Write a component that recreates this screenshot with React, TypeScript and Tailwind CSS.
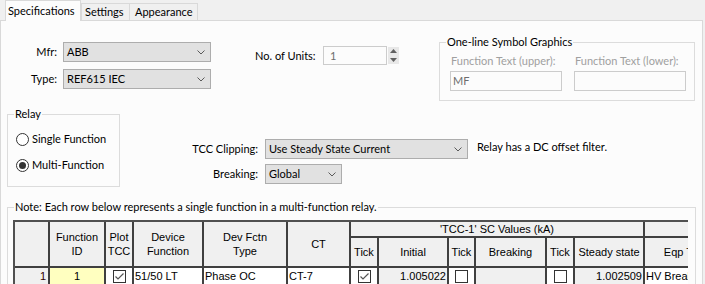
import React from "react";

const Chevron = () => (
  <svg width="8" height="5" viewBox="0 0 8 5" className="shrink-0">
    <path d="M0.5 0.5L4 4L7.5 0.5" fill="none" stroke="#5a5a5a" strokeWidth="1" />
  </svg>
);

function Combo({ className, text }: { className: string; text: string }) {
  return (
    <div
      className={`h-[20px] border border-[#adadad] bg-[#e1e1e1] flex items-center justify-between pl-[3px] pr-[5px] ${className}`}
    >
      <span className="leading-[14px] whitespace-nowrap">{text}</span>
      <Chevron />
    </div>
  );
}

function Radio({ checked, label }: { checked?: boolean; label: string }) {
  return (
    <div className="flex items-center h-[14px]">
      <div className="w-[13px] h-[13px] rounded-full border border-[#333333] bg-white flex items-center justify-center shrink-0">
        {checked && <div className="w-[7px] h-[7px] rounded-full bg-[#333333]" />}
      </div>
      <span className="ml-[3px] leading-[14px] whitespace-nowrap">{label}</span>
    </div>
  );
}

function Check({ checked }: { checked?: boolean }) {
  return (
    <div className="w-[13px] h-[13px] border border-[#333333] bg-white flex items-center justify-center">
      {checked && (
        <svg width="9" height="7" viewBox="0 0 9 7">
          <path d="M0.5 3.5L3 6L8.5 0.5" fill="none" stroke="#555555" strokeWidth="1.2" />
        </svg>
      )}
    </div>
  );
}

const H =
  "bg-[#f0f0f0] border-r-2 border-b-2 border-[#404040] flex items-center justify-center text-center leading-[14px] whitespace-nowrap overflow-hidden";
const D = "border-r-2 border-b-2 border-[#404040] flex items-center whitespace-nowrap overflow-hidden";

export default function App() {
  return (
    <div className="w-[705px] h-[284px] overflow-hidden bg-[#f0f0f0] text-[11px] text-black font-['Lato','Noto_Sans',sans-serif]">
      {/* Tabs */}
      <div className="flex items-end h-[20px] pl-[5px]">
        <div className="relative z-10 h-[21px] -mb-[1px] w-[76px] border border-b-0 border-[#d9d9d9] bg-[#fcfcfc] pl-[2px] pt-[3px] leading-[14px] whitespace-nowrap">
          Specifications
        </div>
        <div className="h-[17px] w-[49px] border border-b-0 border-[#d9d9d9] bg-[#f0f0f0] pl-[3px] pt-[1px] leading-[14px] whitespace-nowrap">
          Settings
        </div>
        <div className="h-[17px] w-[69px] -ml-[1px] border border-b-0 border-[#d9d9d9] bg-[#f0f0f0] pl-[5px] pt-[1px] leading-[14px] whitespace-nowrap">
          Appearance
        </div>
      </div>

      {/* Panel */}
      <div className="w-[703px] h-[270px] border border-[#d9d9d9] bg-[#fcfcfc] flex flex-col overflow-hidden">
        {/* Row 1 */}
        <div className="flex items-start mt-[14px]">
          <div className="mt-[7px] flex flex-col gap-[7px]">
            <div className="flex items-center">
              <span className="w-[56px] text-right leading-[14px]">Mfr:</span>
              <Combo className="ml-[6px] w-[148px]" text="ABB" />
            </div>
            <div className="flex items-center">
              <span className="w-[56px] text-right leading-[14px]">Type:</span>
              <Combo className="ml-[6px] w-[148px]" text="REF615 IEC" />
            </div>
          </div>

          <div className="ml-[44px] mt-[11px] flex items-center">
            <span className="w-[68px] leading-[14px] whitespace-nowrap">No. of Units:</span>
            <div className="w-[64px] h-[19px] border border-[#cccccc] pl-[6px] text-[#6d6d6d] flex items-center leading-[14px]">
              1
            </div>
            <div className="ml-[1px] w-[11px] h-[17px] bg-[#e8e8e8] flex flex-col items-center justify-around">
              <svg width="7" height="4" viewBox="0 0 7 4">
                <path d="M0 4L3.5 0L7 4Z" fill="#606060" />
              </svg>
              <svg width="7" height="4" viewBox="0 0 7 4">
                <path d="M0 0L3.5 4L7 0Z" fill="#606060" />
              </svg>
            </div>
          </div>

          <fieldset className="ml-[40px] w-[256px] h-[66px] border border-[#dcdcdc]">
            <legend className="ml-[6px] px-[1px] leading-[14px] whitespace-nowrap">One-line Symbol Graphics</legend>
            <div className="pl-[10px] pt-[5px] flex gap-[12px]">
              <div className="w-[112px] flex flex-col">
                <span className="pl-[1px] leading-[14px] text-[#a0a0a0] whitespace-nowrap">Function Text (upper):</span>
                <div className="mt-[3px] h-[20px] border border-[#cccccc] pl-[2px] text-[#6d6d6d] flex items-center">MF</div>
              </div>
              <div className="w-[112px] flex flex-col">
                <span className="pl-[1px] leading-[14px] text-[#a0a0a0] whitespace-nowrap">Function Text (lower):</span>
                <div className="mt-[3px] h-[20px] border border-[#cccccc]" />
              </div>
            </div>
          </fieldset>
        </div>

        {/* Row 2 */}
        <div className="flex items-start mt-[6px]">
          <fieldset className="ml-[6px] w-[113px] h-[80px] border border-[#dcdcdc]">
            <legend className="ml-[6px] px-[1px] leading-[14px]">Relay</legend>
            <div className="pl-[8px] pt-[11px] flex flex-col gap-[12px]">
              <Radio label="Single Function" />
              <Radio checked label="Multi-Function" />
            </div>
          </fieldset>

          <div className="ml-[50px] mt-[32px] flex flex-col gap-[5px]">
            <div className="flex items-start">
              <span className="w-[88px] text-right leading-[20px] whitespace-nowrap">TCC Clipping:</span>
              <Combo className="ml-[7px] w-[203px]" text="Use Steady State Current" />
              <span className="ml-[9px] mt-[1px] leading-[14px] bg-white whitespace-nowrap">
                Relay has a DC offset filter.
              </span>
            </div>
            <div className="flex items-start">
              <span className="w-[88px] text-right leading-[20px]">Breaking:</span>
              <Combo className="ml-[7px] w-[77px]" text="Global" />
            </div>
          </div>
        </div>

        {/* Row 3 */}
        <fieldset className="ml-[6px] mt-[13px] w-[689px] h-[120px] shrink-0 border border-[#dcdcdc]">
          <legend className="ml-[6px] px-[1px] leading-[14px] whitespace-nowrap">
            Note: Each row below represents a single function in a multi-function relay.
          </legend>
          <div className="ml-[5px] mt-[6px] w-[675px] overflow-hidden border-l-2 border-t-2 border-[#505050] bg-[#f0f0f0] font-['Liberation_Sans','Arial',sans-serif] text-[11px]">
            <div className="grid grid-cols-[35px_56px_28px_70px_84px_63px_28px_70px_27px_71px_28px_70px_86px] grid-rows-[16px_30px_18px] w-max">
              <div className={`${H} row-span-2`} />
              <div className={`${H} row-span-2`}>
                Function
                <br />
                ID
              </div>
              <div className={`${H} row-span-2`}>
                Plot
                <br />
                TCC
              </div>
              <div className={`${H} row-span-2`}>
                Device
                <br />
                Function
              </div>
              <div className={`${H} row-span-2`}>
                Dev Fctn
                <br />
                Type
              </div>
              <div className={`${H} row-span-2`}>CT</div>
              <div className={`${H} col-span-6`}>'TCC-1' SC Values (kA)</div>
              <div className={H} />
              <div className={H}>Tick</div>
              <div className={H}>Initial</div>
              <div className={H}>Tick</div>
              <div className={H}>Breaking</div>
              <div className={H}>Tick</div>
              <div className={H}>Steady state</div>
              <div className={H}>Eqp Type</div>

              <div className={`${D} bg-[#f0f0f0] justify-end pr-[2px] text-[#300000]`}>1</div>
              <div className={`${D} bg-[#ffffc0] justify-center`}>1</div>
              <div className={`${D} bg-white justify-center`}>
                <Check checked />
              </div>
              <div className={`${D} bg-white pl-[1px]`}>51/50 LT</div>
              <div className={`${D} bg-white pl-[1px]`}>Phase OC</div>
              <div className={`${D} bg-white pl-[1px]`}>CT-7</div>
              <div className={`${D} bg-white justify-center`}>
                <Check checked />
              </div>
              <div className={`${D} bg-[#f0f0f0] justify-end pr-[1px]`}>1.005022</div>
              <div className={`${D} bg-white justify-center`}>
                <Check />
              </div>
              <div className={`${D} bg-[#f0f0f0]`} />
              <div className={`${D} bg-white justify-center`}>
                <Check />
              </div>
              <div className={`${D} bg-[#f0f0f0] justify-end pr-[1px]`}>1.002509</div>
              <div className={`${D} bg-white pl-[1px]`}>HV Breaker</div>
            </div>
          </div>
        </fieldset>
      </div>
    </div>
  );
}
